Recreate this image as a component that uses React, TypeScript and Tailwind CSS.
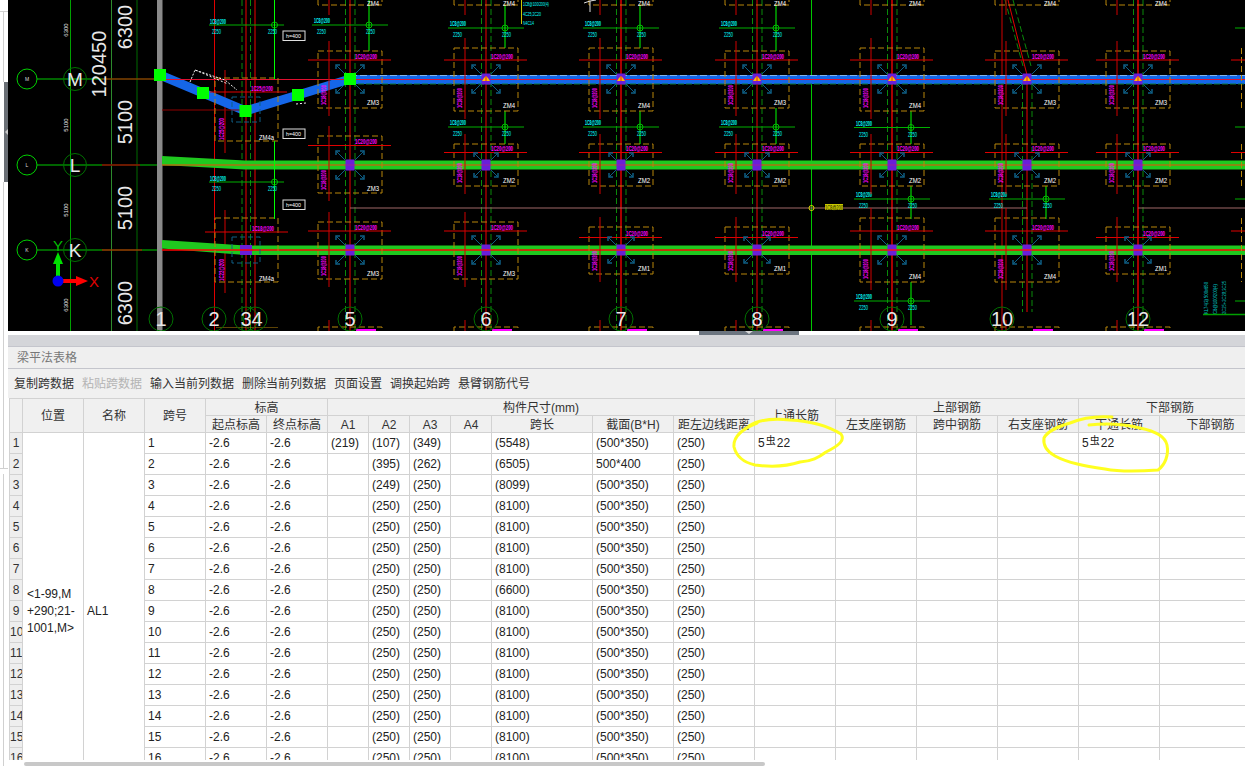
import React from 'react';

const FONT = "[font-family:'Liberation_Sans','Noto_Sans_CJK_SC',sans-serif]";

type Block = { top: number; bottom: number; red: number; cy: number; teal: number; name: string; nameY: number; kind?: 'blue' | 'green' };

const M_TALL = { top: 48, bottom: 111, red: 60, cy: 79, teal: 14, nameY: 108, kind: 'blue' as const };
const M_SHORT = { top: 51, bottom: 108, red: 60, cy: 79, teal: 14, nameY: 105, kind: 'blue' as const };
const L_NORMAL = { top: 144, bottom: 186, red: 152.5, cy: 165, teal: 12, nameY: 183 };
const L_TALL = { top: 136, bottom: 193, red: 145.5, cy: 165, teal: 14, nameY: 191 };
const K_TALL = { top: 222, bottom: 279, red: 231, cy: 250, teal: 14, nameY: 276 };
const K_BIG = { top: 218, bottom: 282, red: 231, cy: 250, teal: 14, nameY: 279 };
const K_SHORT = { top: 227, bottom: 274, red: 237.5, cy: 250, teal: 13, nameY: 271 };

const columns: { x: number; dark?: boolean; blocks: Block[] }[] = [
  { x: 350, blocks: [{ ...M_SHORT, name: 'ZM3', kind: undefined }, { ...L_TALL, name: 'ZM3' }, { ...K_TALL, name: 'ZM3' }] },
  { x: 486, blocks: [{ ...M_TALL, name: 'ZM4' }, { ...L_NORMAL, name: 'ZM2' }, { ...K_TALL, name: 'ZM3' }] },
  { x: 621, dark: true, blocks: [{ ...M_TALL, name: 'ZM4' }, { ...L_NORMAL, name: 'ZM2' }, { ...K_SHORT, name: 'ZM1' }] },
  { x: 757, blocks: [{ ...M_SHORT, name: 'ZM3' }, { ...L_NORMAL, name: 'ZM2' }, { ...K_SHORT, name: 'ZM1' }] },
  { x: 892, dark: true, blocks: [{ ...M_TALL, name: 'ZM4' }, { ...L_NORMAL, name: 'ZM2' }, { ...K_BIG, name: 'ZM4' }] },
  { x: 1027, blocks: [{ ...M_SHORT, name: 'ZM3' }, { ...L_NORMAL, name: 'ZM2' }, { ...K_BIG, name: 'ZM4' }] },
  { x: 1138, dark: true, blocks: [{ ...M_SHORT, name: 'ZM3' }, { ...L_NORMAL, name: 'ZM2' }, { ...K_SHORT, name: 'ZM1' }] },
];

// the next grid line sits past the right edge, only its lines reach into view
const offscreen = [60, 152.5, 231];

const ticks = [
  { x: 350, y: 25, a: 0, b: 51 },
  { x: 486, y: 28, a: 5, b: 48 },
  { x: 486, y: 127, a: 111, b: 144 },
  { x: 621, y: 28, a: 5, b: 48 },
  { x: 621, y: 127, a: 111, b: 144 },
  { x: 757, y: 28, a: 5, b: 51 },
  { x: 757, y: 127, a: 108, b: 144 },
  { x: 892, y: 127.5, a: 111, b: 144 },
  { x: 892, y: 199, a: 186, b: 219 },
  { x: 892, y: 301, a: 282, b: 325 },
  { x: 1027, y: 199, a: 186, b: 219 },
];

const axisLabels = [
  { t: '1', x: 161 },
  { t: '2', x: 214 },
  { t: '5', x: 350 },
  { t: '6', x: 486 },
  { t: '7', x: 621 },
  { t: '8', x: 757 },
  { t: '9', x: 892 },
  { t: '10', x: 1002 },
  { t: '12', x: 1138 },
];

function ColumnBlock({ x, b }: { x: number; b: Block }) {
  const t = b.teal;
  const hasCore = b.kind !== undefined || b.cy !== 79;
  return (
    <g>
      <rect x={x - 32} y={b.top} width={64} height={b.bottom - b.top} fill="none" stroke="#b8860b" strokeDasharray="6 3" />
      <line x1={x - 42} x2={x + 41} y1={b.red} y2={b.red} stroke="#e00000" />
      <line x1={x - 21} x2={x - 21} y1={b.top - 10} y2={b.bottom + 8} stroke="#d00000" />
      <g stroke="#0e5f85" fill="none">
        <path d={`M${x - t} ${b.cy - t + 4}V${b.cy - t}H${x - t + 4}M${x + t - 4} ${b.cy - t}H${x + t}V${b.cy - t + 4}M${x - t} ${b.cy + t - 4}V${b.cy + t}H${x - t + 4}M${x + t - 4} ${b.cy + t}H${x + t}V${b.cy + t - 4}`} strokeWidth={1.5} />
        <path d={`M${x - t} ${b.cy - t}L${x - 5} ${b.cy - 5}M${x + t} ${b.cy - t}L${x + 5} ${b.cy - 5}M${x - t} ${b.cy + t}L${x - 5} ${b.cy + 5}M${x + t} ${b.cy + t}L${x + 5} ${b.cy + 5}`} />
      </g>
      {hasCore && <rect x={x - 4.5} y={b.cy - 5.5} width={9} height={11} fill="#6a1fd8" />}
      {b.kind === 'blue' && (
        <g>
          <path d={`M${x - 4} ${b.cy + 2}L${x - 2} ${b.cy - 1}L${x} ${b.cy - 3}L${x + 2} ${b.cy - 1}L${x + 4} ${b.cy + 2}Z`} fill="#ffc000" />
          <line x1={x} x2={x} y1={b.cy - 3} y2={b.cy + 2} stroke="#e82020" />
        </g>
      )}
      {b.cy === 250 && <line x1={x - 4.5} x2={x + 4.5} y1={250} y2={250} stroke="#ff1010" strokeWidth={1.5} />}
      {b.cy === 165 && <line x1={x - 6} x2={x + 6} y1={165} y2={165} stroke="#c02080" strokeOpacity={0.6} />}
      <text x={x + 5} y={b.red - 1.5} fontSize={8} fontWeight={700} textLength={22} lengthAdjust="spacingAndGlyphs" fill="#ff00ff" className={FONT}>1C20@200</text>
      <text transform={`translate(${x - 24} ${b.bottom - 3}) rotate(-90)`} fontSize={8} fontWeight={700} textLength={20} lengthAdjust="spacingAndGlyphs" fill="#ff00ff" className={FONT}>1C18@200</text>
      <text x={x + 17} y={b.nameY} fontSize={8} textLength={12} lengthAdjust="spacingAndGlyphs" fill="#ffffff" className={FONT}>{b.name}</text>
    </g>
  );
}

function Tick({ x, y, a, b }: { x: number; y: number; a: number; b: number }) {
  return (
    <g>
      <line x1={x - 38} x2={x + 38} y1={y} y2={y} stroke="#00b000" />
      {b > 0 && <line x1={x + 19} x2={x + 19} y1={a} y2={b} stroke="#00ff00" />}
      <circle cx={x + 19} cy={y} r={3} fill="none" stroke="#00c000" />
      <text x={x - 36} y={y - 2} fontSize={7} fontWeight={700} textLength={16} lengthAdjust="spacingAndGlyphs" fill="#00ffff" className={FONT}>1C8@200</text>
      <text x={x - 33} y={y + 9} fontSize={7} textLength={9} lengthAdjust="spacingAndGlyphs" fill="#00ffff" className={FONT}>2250</text>
      <text x={x + 16} y={y + 9} fontSize={7} textLength={9} lengthAdjust="spacingAndGlyphs" fill="#00ffff" className={FONT}>2250</text>
    </g>
  );
}

function RowAxis({ y, t }: { y: number; t: string }) {
  return (
    <g>
      <line x1={37} x2={160} y1={y} y2={y} stroke="#00c800" />
      <circle cx={27} cy={y} r={10} fill="#000" stroke="#00d000" />
      <circle cx={75} cy={y} r={11.5} fill="none" stroke="#007000" />
      <text x={27} y={y + 2} fontSize={5} textAnchor="middle" fill="#ddd" className={FONT}>{t}</text>
      <text x={75} y={y + 7} fontSize={19} textAnchor="middle" fill="#e8e8e8" className={FONT}>{t}</text>
    </g>
  );
}

function DimText({ x, y, t, size = 20 }: { x: number; y: number; t: string; size?: number }) {
  return (
    <text transform={`translate(${x} ${y}) rotate(-90)`} fontSize={size} textAnchor="middle" fill="#e8e8e8" className={FONT}>{t}</text>
  );
}

function HBox({ y }: { y: number }) {
  return (
    <g>
      <rect x={283} y={y} width={22} height={9.5} fill="#000" stroke="#e0e0e0" />
      <text x={286} y={y + 7} fontSize={6} textLength={15} lengthAdjust="spacingAndGlyphs" fill="#fff" className={FONT}>h=400</text>
    </g>
  );
}

function CadView() {
  return (
    <svg viewBox="8 0 1237 331" className="block w-[1237px] h-[331px] shrink-0 bg-black">
      {/* grid lines */}
      <line x1={70.5} x2={70.5} y1={0} y2={331} stroke="#00a000" />
      <line x1={111.5} x2={111.5} y1={0} y2={331} stroke="#2c8a2c" />
      <line x1={137} x2={137} y1={0} y2={331} stroke="#006a00" />
      <line x1={811.5} x2={811.5} y1={0} y2={331} stroke="#00c800" />
      <line x1={214.5} x2={214.5} y1={0} y2={331} stroke="#e00000" />
      <line x1={225} x2={225} y1={70} y2={153} stroke="#d00000" />
      <line x1={225} x2={225} y1={210} y2={293} stroke="#d00000" />
      <line x1={1002} x2={1002} y1={0} y2={331} stroke="#d00000" />
      {[242, 250.5].map(x => (
        <line key={x} x1={x} x2={x} y1={0} y2={331} stroke="#0a8a0a" strokeDasharray="6 3" />
      ))}
      <line x1={246} x2={246} y1={0} y2={331} stroke="#f00000" />
      <line x1={255} x2={255} y1={0} y2={331} stroke="#f00000" />
      {columns.map(c => (
        <g key={c.x}>
          <line x1={c.x - 4.5} x2={c.x - 4.5} y1={c.x === 1027 ? 75 : 0} y2={c.x === 1027 ? 312 : 331} stroke="#0a8a0a" strokeDasharray="6 3" />
          <line x1={c.x + 5} x2={c.x + 5} y1={c.x === 1027 ? 75 : 0} y2={c.x === 1027 ? 312 : 331} stroke="#0a8a0a" strokeDasharray="6 3" />
          <line x1={c.x} x2={c.x} y1={c.x === 1027 ? 75 : 0} y2={c.x === 1027 ? 312 : 331} stroke={c.dark ? '#a80000' : '#f00000'} strokeWidth={c.dark ? 2 : 1} />
        </g>
      ))}
      <path d="M1005 0L1023 66M1013 0L1031 66" stroke="#0a8a0a" strokeDasharray="6 3" fill="none" />
      <path d="M1008 0L1027 75" stroke="#e00000" fill="none" />

      {/* axis section marks */}
      <line x1={350} x2={1027} y1={208} y2={208} stroke="#a06868" />
      <line x1={1138} x2={1245} y1={208} y2={208} stroke="#a06868" />
      <circle cx={811.5} cy={208} r={2.5} fill="none" stroke="#d8d800" />
      <rect x={825} y={204} width={18} height={6} fill="#c8c800" />
      <text x={825} y={209.5} fontSize={7} textLength={18} lengthAdjust="spacingAndGlyphs" fill="#202000" className={FONT}>1C8@200</text>

      <RowAxis y={79} t="M" />
      <RowAxis y={165} t="L" />
      <RowAxis y={250} t="K" />
      <line x1={102} x2={155} y1={79} y2={79} stroke="#c00000" />
      <line x1={102} x2={140} y1={165} y2={165} stroke="#900000" strokeWidth={1.5} />
      <line x1={102} x2={142} y1={250} y2={250} stroke="#e00000" />

      {/* gray wall */}
      <rect x={157} y={0} width={5.5} height={331} fill="#8a8a8a" />

      {/* beams */}
      <polygon points="162,156 245,160.5 1245,160.5 1245,169.5 245,169.5 162,165" fill="#1fc81f" />
      <line x1={162} x2={1245} y1={165} y2={165} stroke="#b07010" strokeWidth={1.5} />
      <polygon points="162,240 245,245.5 1245,245.5 1245,255 245,255 162,248.5" fill="#1fc81f" />
      <line x1={162} x2={1245} y1={250} y2={250} stroke="#ff0000" strokeWidth={1.5} />
      <polyline points="160,75 203,93 245.5,111 298,95 350,79" fill="none" stroke="#1566e8" strokeWidth={9} />
      <rect x={350} y={75} width={895} height={9} fill="#1566e8" />
      <line x1={350} x2={1245} y1={75.5} y2={75.5} stroke="#7fb4f0" strokeDasharray="7 3" />
      <line x1={350} x2={1245} y1={84} y2={84} stroke="#0a7a3a" strokeDasharray="6 2" />
      <line x1={160} x2={1245} y1={79.5} y2={79.5} stroke="#e01030" />
      <line x1={162} x2={240} y1={110} y2={110} stroke="#900000" />

      {/* column 3-4 */}
      <rect x={215} y={78} width={63} height={63} fill="none" stroke="#b8860b" strokeDasharray="6 3" />
      <rect x={215} y={218} width={63} height={64} fill="none" stroke="#b8860b" strokeDasharray="6 3" />
      <line x1={210} x2={287} y1={92} y2={92} stroke="#e00000" />
      <line x1={205} x2={288} y1={232} y2={232} stroke="#e00000" />
      <rect x={232} y={97} width={28} height={25} fill="none" stroke="#0e5f85" strokeDasharray="5 3" />
      <rect x={232} y={237} width={28} height={26} fill="none" stroke="#0e5f85" strokeDasharray="5 3" />
      <rect x={240} y={245} width={12} height={10} fill="#6a1fd8" />
      <line x1={240} x2={253} y1={250} y2={250} stroke="#ff0000" strokeWidth={1.5} />
      <text x={251} y={91} fontSize={8} fontWeight={700} textLength={22} lengthAdjust="spacingAndGlyphs" fill="#ff00ff" className={FONT}>1C25@200</text>
      <text x={252} y={231} fontSize={8} fontWeight={700} textLength={22} lengthAdjust="spacingAndGlyphs" fill="#ff00ff" className={FONT}>1C18@200</text>
      <text transform="translate(224 140) rotate(-90)" fontSize={8} fontWeight={700} textLength={22} lengthAdjust="spacingAndGlyphs" fill="#ff00ff" className={FONT}>1C25@200</text>
      <text transform="translate(224 281) rotate(-90)" fontSize={8} fontWeight={700} textLength={22} lengthAdjust="spacingAndGlyphs" fill="#ff00ff" className={FONT}>1C22@200</text>
      <text x={259} y={140} fontSize={8} textLength={15} lengthAdjust="spacingAndGlyphs" fill="#fff" className={FONT}>ZM4a</text>
      <text x={259} y={281} fontSize={8} textLength={15} lengthAdjust="spacingAndGlyphs" fill="#fff" className={FONT}>ZM4a</text>
      <line x1={209} x2={284} y1={25} y2={25} stroke="#00b000" />
      <line x1={209} x2={284} y1={182} y2={182} stroke="#00b000" />
      <line x1={274.5} x2={274.5} y1={0} y2={79} stroke="#00ff00" />
      <line x1={274.5} x2={274.5} y1={141} y2={219} stroke="#00ff00" />
      <circle cx={274.5} cy={25} r={3} fill="none" stroke="#00c000" />
      <circle cx={274.5} cy={182} r={3} fill="none" stroke="#00c000" />
      <text x={210} y={24} fontSize={7} fontWeight={700} textLength={16} lengthAdjust="spacingAndGlyphs" fill="#00ffff" className={FONT}>1C8@200</text>
      <text x={212} y={34} fontSize={7} textLength={9} lengthAdjust="spacingAndGlyphs" fill="#00ffff" className={FONT}>2250</text>
      <text x={268} y={34} fontSize={7} textLength={9} lengthAdjust="spacingAndGlyphs" fill="#00ffff" className={FONT}>2250</text>
      <text x={210} y={181} fontSize={7} fontWeight={700} textLength={16} lengthAdjust="spacingAndGlyphs" fill="#00ffff" className={FONT}>1C8@200</text>
      <text x={212} y={191} fontSize={7} textLength={9} lengthAdjust="spacingAndGlyphs" fill="#00ffff" className={FONT}>2250</text>
      <text x={268} y={191} fontSize={7} textLength={9} lengthAdjust="spacingAndGlyphs" fill="#00ffff" className={FONT}>2250</text>
      <HBox y={31} />
      <HBox y={129} />
      <HBox y={200} />

      {ticks.map(t => (
        <Tick key={`${t.x}-${t.y}`} {...t} />
      ))}

      {/* edge of the next grid line */}
      <line x1={1241.5} x2={1241.5} y1={48} y2={108} stroke="#b8860b" strokeDasharray="6 3" />
      <line x1={1241.5} x2={1241.5} y1={144} y2={186} stroke="#b8860b" strokeDasharray="6 3" />
      <line x1={1241.5} x2={1241.5} y1={218} y2={282} stroke="#b8860b" strokeDasharray="6 3" />
      {offscreen.map(y => (
        <line key={y} x1={1231} x2={1245} y1={y} y2={y} stroke="#e00000" />
      ))}
      {[28, 127, 199, 301].map(y => (
        <line key={y} x1={1235} x2={1245} y1={y} y2={y} stroke="#00b000" />
      ))}

      {/* columns with their partial neighbours above and below */}
      {columns.map(c => (
        <g key={c.x}>
          <path d={`M${c.x - 32} 0V5H${c.x + 32}V0`} fill="none" stroke="#b8860b" strokeDasharray="6 3" />
          <path d={`M${c.x - 32} 331V327H${c.x + 32}V331`} fill="none" stroke="#b8860b" strokeDasharray="6 3" />
          <line x1={c.x - 21} x2={c.x - 21} y1={0} y2={15} stroke="#d00000" />
          <line x1={c.x - 21} x2={c.x - 21} y1={320} y2={331} stroke="#d00000" />
          <rect x={c.x + 6} y={329} width={20} height={2} fill="#ff00ff" />
          <text x={c.x + 17} y={6} fontSize={8} textLength={12} lengthAdjust="spacingAndGlyphs" fill="#fff" className={FONT}>ZM4</text>
          {c.blocks.map(b => (
            <ColumnBlock key={b.cy} x={c.x} b={b} />
          ))}
        </g>
      ))}
      <rect x={216} y={327} width={62} height={0.5} fill="#b8860b" />

      {/* beam grips */}
      {[[160, 75], [203, 93], [245.5, 111], [298, 95], [350, 79]].map(([x, y]) => (
        <rect key={x} x={x - 6} y={y - 6} width={12} height={12} fill="#00ff00" />
      ))}
      <path d="M190 82L195 70L225 80L237 90" fill="none" stroke="#f0f0f0" strokeDasharray="2 1.5" />
      <path d="M195 70L228 84" fill="none" stroke="#f0f0f0" strokeDasharray="2 2" />
      <path d="M296 104L306 103" fill="none" stroke="#f0f0f0" strokeDasharray="2 2" />

      {/* notes */}
      <line x1={521.5} x2={521.5} y1={0} y2={24} stroke="#c8c800" />
      <text x={523} y={6} fontSize={6} textLength={26} lengthAdjust="spacingAndGlyphs" fill="#00ffff" className={FONT}>1C8@100/200(4)</text>
      <text x={523} y={16} fontSize={6} textLength={18} lengthAdjust="spacingAndGlyphs" fill="#00ffff" className={FONT}>4C25;2C20</text>
      <text x={523} y={25} fontSize={6} textLength={11} lengthAdjust="spacingAndGlyphs" fill="#00ffff" className={FONT}>N4C14</text>
      <path d="M584 3L590 1L596 0M590 1V12" stroke="#ddd" fill="none" />
      <g className={FONT} fill="#00c8c8" fontSize={6}>
        <text transform="translate(1208 314) rotate(-90)" textLength={32} lengthAdjust="spacingAndGlyphs">KL74(3) 500x650</text>
        <text transform="translate(1217 314) rotate(-90)" textLength={30} lengthAdjust="spacingAndGlyphs">C8@100/200(4)</text>
        <text transform="translate(1226 314) rotate(-90)" textLength={33} lengthAdjust="spacingAndGlyphs">2C25+2C20;3C25</text>
      </g>
      <line x1={1203} x2={1245} y1={314.5} y2={314.5} stroke="#00a000" strokeWidth={1.5} />

      {/* dimensions */}
      <DimText x={132} y={27} t="6300" />
      <DimText x={106} y={64} t="120450" />
      <DimText x={132} y={122} t="5100" />
      <DimText x={132} y={208} t="5100" />
      <DimText x={132} y={303} t="6300" />
      <DimText x={68} y={30} t="6300" size={6} />
      <DimText x={68} y={125} t="5100" size={6} />
      <DimText x={68} y={210} t="5100" size={6} />
      <DimText x={68} y={305} t="6300" size={6} />

      {/* axis bubbles */}
      {axisLabels.map(a => (
        <g key={a.t}>
          <circle cx={a.x} cy={319} r={12} fill="none" stroke="#007000" />
          <text x={a.x} y={326} fontSize={20} textAnchor="middle" fill="#e8e8e8" className={FONT}>{a.t}</text>
        </g>
      ))}
      <circle cx={246} cy={319} r={12} fill="none" stroke="#007000" />
      <circle cx={255} cy={319} r={12} fill="none" stroke="#007000" />
      <text x={246} y={326} fontSize={20} textAnchor="middle" fill="#e8e8e8" className={FONT}>3</text>
      <text x={257} y={326} fontSize={20} textAnchor="middle" fill="#e8e8e8" className={FONT}>4</text>

      {/* ucs icon */}
      <rect x={56} y={262} width={4} height={18} fill="#00e000" />
      <path d="M58 252L63 264H53Z" fill="#00e000" />
      <text x={58} y={251} fontSize={15} textAnchor="middle" fill="#00c000" className={FONT}>Y</text>
      <rect x={63} y={279} width={14} height={4} fill="#ff0000" />
      <path d="M88 281L76 276V286Z" fill="#ff0000" />
      <text x={94} y={287} fontSize={15} textAnchor="middle" fill="#e00000" className={FONT}>X</text>
      <circle cx={58} cy={281} r={5.5} fill="#0000f0" />
    </svg>
  );
}

const colWidths = [13, 61, 61, 61, 61, 61, 41, 41, 41, 41, 101, 81, 81, 81, 81, 81, 81, 81, 102];
const a1 = ['(219)'];
const a2 = ['(107)', '(395)', '(249)'];
const a3 = ['(349)', '(262)'];
const spans = ['(5548)', '(6505)', '(8099)', '(8100)', '(8100)', '(8100)', '(8100)', '(6600)'];
const th = 'border border-[#d2d2d2] bg-[#f0f0f0] p-0 pt-px font-normal leading-[14px] text-center text-[#333] overflow-hidden whitespace-nowrap';
const td = 'border border-[#d2d2d2] h-[21px] p-0 pl-[3px] text-[#222] overflow-hidden whitespace-nowrap';

function Rebar() {
  return (
    <span className="inline-block w-[12px] text-center text-[10px] leading-none align-[3px]">虫</span>
  );
}

function BeamTable() {
  const rows = Array.from({ length: 17 }, (_, i) => i);
  return (
    <div className="ml-px h-[362px] overflow-hidden">
      <table className={`table-fixed border-collapse w-[1252px] text-[12px] leading-[16px] ${FONT}`}>
        <colgroup>
          {colWidths.map((w, i) => (
            <col key={i} style={{ width: w }} />
          ))}
        </colgroup>
        <thead>
          <tr className="h-[17px]">
            <th rowSpan={2} className={th}></th>
            <th rowSpan={2} className={th}>位置</th>
            <th rowSpan={2} className={th}>名称</th>
            <th rowSpan={2} className={th}>跨号</th>
            <th colSpan={2} className={th}>标高</th>
            <th colSpan={7} className={th}>构件尺寸(mm)</th>
            <th rowSpan={2} className={th}>上通长筋</th>
            <th colSpan={3} className={th}>上部钢筋</th>
            <th colSpan={2} className={th}>下部钢筋</th>
          </tr>
          <tr className="h-[17px]">
            {['起点标高', '终点标高', 'A1', 'A2', 'A3', 'A4', '跨长', '截面(B*H)', '距左边线距离', '左支座钢筋', '跨中钢筋', '右支座钢筋', '下通长筋', '下部钢筋'].map(h => (
              <th key={h} className={th}>{h}</th>
            ))}
          </tr>
        </thead>
        <tbody>
          {rows.map(i => (
            <tr key={i} className="h-[21px]">
              <td className={`border border-[#d2d2d2] bg-[#eeeeee] p-0 text-[#333] overflow-hidden whitespace-nowrap ${i >= 9 ? 'text-left' : 'text-center'}`}>{i + 1}</td>
              {i === 0 && (
                <>
                  <td rowSpan={17} className="border border-[#d2d2d2] p-0 pl-[4px] text-[#222] leading-[17px]">
                    &lt;1-99,M<br />+290;21-<br />1001,M&gt;
                  </td>
                  <td rowSpan={17} className="border border-[#d2d2d2] p-0 pl-[3px] text-[#222]">AL1</td>
                </>
              )}
              <td className={td}>{i + 1}</td>
              <td className={td}>-2.6</td>
              <td className={td}>-2.6</td>
              <td className={td}>{a1[i] ?? ''}</td>
              <td className={td}>{a2[i] ?? '(250)'}</td>
              <td className={td}>{a3[i] ?? '(250)'}</td>
              <td className={td}></td>
              <td className={td}>{spans[i] ?? '(8100)'}</td>
              <td className={td}>{i === 1 ? '500*400' : '(500*350)'}</td>
              <td className={td}>(250)</td>
              <td className={td}>{i === 0 && <>5<Rebar />22</>}</td>
              <td className={td}></td>
              <td className={td}></td>
              <td className={td}></td>
              <td className={td}>{i === 0 && <>5<Rebar />22</>}</td>
              <td className={td}></td>
            </tr>
          ))}
        </tbody>
      </table>
    </div>
  );
}

const tools = ['复制跨数据', '粘贴跨数据', '输入当前列数据', '删除当前列数据', '页面设置', '调换起始跨', '悬臂钢筋代号'];

export default function App() {
  return (
    <div className={`relative flex h-[766px] w-[1245px] overflow-hidden bg-white ${FONT}`}>
      <aside className="flex w-2 shrink-0 flex-col">
        <div className="h-[12px] border-b border-[#d0d0d0]" />
        <div className="h-[70px] w-[4px] border-r border-[#d0d0d0]" />
        <div className="ml-[4px] flex h-[100px] w-[4px] items-center justify-center bg-[#6a6f75]">
          <span className="h-0 w-0 border-y-[3px] border-r-[3px] border-y-transparent border-r-[#c8c8c8]" />
        </div>
        <div className="h-[286px] w-[4px] border-r border-[#d0d0d0]" />
        <div className="h-[6px] border-t border-[#d0d0d0]" />
        <div className="flex-1 w-[4px] border-r border-[#d0d0d0]" />
      </aside>

      <main className="flex min-w-0 flex-1 flex-col">
        <CadView />
        <div className="flex h-1 shrink-0 justify-start pl-[691px]">
          <div className="flex h-1 w-[100px] justify-center bg-[#6c7580]">
            <span className="h-0 w-0 border-x-[4px] border-t-[3px] border-x-transparent border-t-[#d8d8d8]" />
          </div>
        </div>
        <div className="h-[12px] shrink-0 border-b border-[#c4c5cc] bg-[#d4d5d9]" />
        <div className="flex h-[22px] shrink-0 items-center border-b border-[#c4c5cc] bg-[#efefef] pl-[9px] text-[12px] text-[#777]">
          梁平法表格
        </div>
        <div className="flex h-[29px] shrink-0 items-center gap-2 bg-[#f0f0f0] pl-[6px] text-[12px] text-[#333]">
          {tools.map(t => (
            <span key={t} className={t === '粘贴跨数据' ? 'text-[#b4b4b4]' : ''}>{t}</span>
          ))}
        </div>
        <BeamTable />
        <div className="h-[2px] shrink-0" />
        <div className="ml-4 h-1 w-[741px] shrink-0 rounded-sm bg-[#c8c8c8]" />
      </main>

      {/* marker rings drawn over the screenshot */}
      <svg viewBox="0 0 1245 766" className="pointer-events-none absolute inset-0 h-[766px] w-[1245px]">
        <path d="M749 426C758 420 772 418 790 420C810 421 828 426 841 434C845 440 840 445 826 452C818 458 812 461 800 462C785 467 770 467 755 465C742 462 736 455 734 447C733 437 742 429 757 423" fill="none" stroke="#ffff20" strokeWidth={3} strokeLinecap="round" />
        <path d="M1089 425C1105 423 1120 423 1140 428C1155 431 1165 436 1167 445C1169 455 1165 465 1158 470C1145 471 1120 472 1105 469C1085 466 1068 463 1055 456C1046 451 1043 445 1044 438C1048 430 1060 426 1070 423C1082 418 1098 416 1112 417" fill="none" stroke="#ffff20" strokeWidth={3} strokeLinecap="round" />
      </svg>
    </div>
  );
}
